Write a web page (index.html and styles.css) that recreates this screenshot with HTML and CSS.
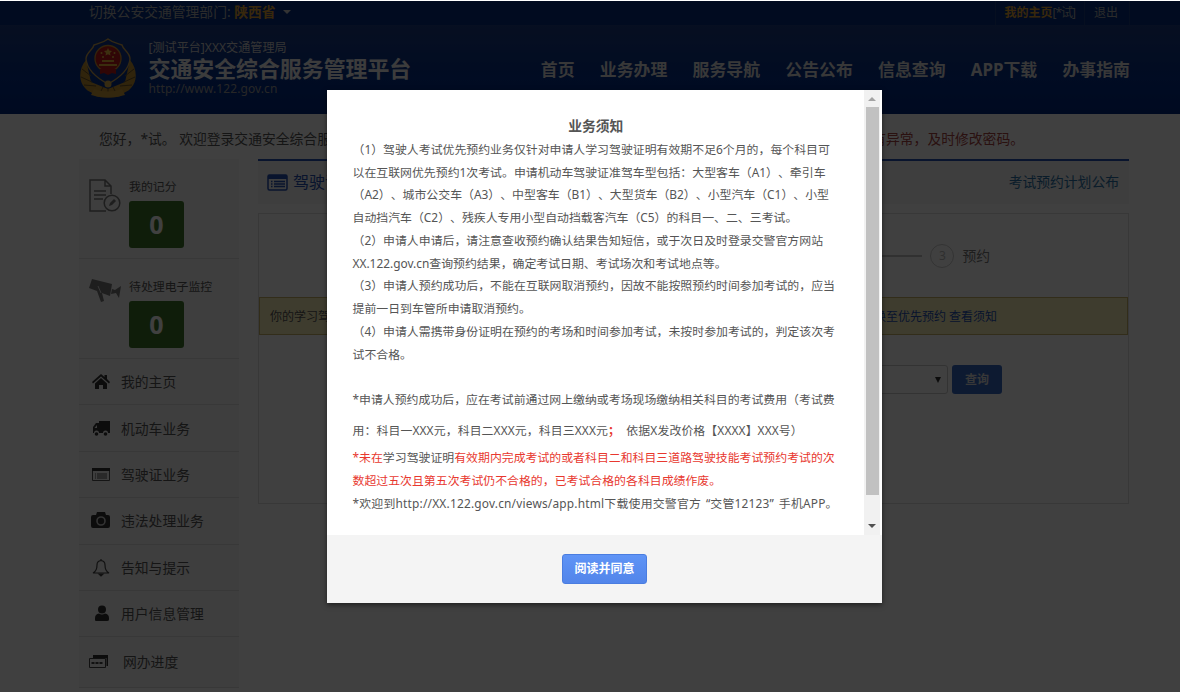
FILE: index.html
```
<!DOCTYPE html>
<html lang="zh-CN">
<head>
<meta charset="UTF-8">
<title>交通安全综合服务管理平台</title>
<link rel="stylesheet" href="styles.css">
</head>
<body>

<div class="topbar">
  <div class="container topbar-in">
    <div class="depart">切换公安交通管理部门: <b>陕西省</b><i class="caret"></i></div>
    <div class="user">
      <span class="user-item"><b>我的主页</b><span class="name">[*试]</span></span>
      <span class="user-item exit">退出</span>
    </div>
  </div>
</div>

<div class="header">
  <div class="container header-in">
    <svg class="logo" width="58" height="60" viewBox="0 0 58 60">
      <path d="M7 22C0 30-1 43 6 50c3 4 8 4 10 8 8 2 18 2 26 0 2-4 7-4 10-8 7-7 6-20-1-28l-5 22-17 7-17-7z" fill="#c08f30"/>
      <path d="M3 31l9 7M2 39l11 5M5 47l12 1M55 31l-9 7M56 39l-11 5M53 47l-12 1M20 57l4-8M38 57l-4-8M29 58v-8" stroke="#6b5128" stroke-width="1" fill="none"/>
      <path d="M29 1c5 4 10 4 14 6 1 5 8 7 8 14-1 10-9 18-22 25C16 39 8 31 7 21c0-7 7-9 8-14 4-2 9-2 14-6z" fill="#13348a" stroke="#c8a050" stroke-width="1.4"/>
      <circle cx="29" cy="20.500" r="13" fill="#c01818" stroke="#c89030" stroke-width="1.300"/>
      <path d="M29 10l1.200 2.600 2.800.3-2 2 .5 2.700-2.500-1.300-2.500 1.300.5-2.700-2-2 2.800-.3z" fill="#f0c040"/>
      <circle cx="22.500" cy="15" r="1" fill="#f0c040"/><circle cx="35.500" cy="15" r="1" fill="#f0c040"/>
      <circle cx="24" cy="19" r="1" fill="#f0c040"/><circle cx="34" cy="19" r="1" fill="#f0c040"/>
      <path d="M23 22h12v2H23zM20 26h18v2H20z" fill="#e8b23a"/>
      <path d="M21 31h16v5l-4-1-4 2-4-2-4 1z" fill="#c01818"/>
      <circle cx="29" cy="46" r="3.500" fill="#d8ab48"/>
      <path d="M15 51q14 5 28 0l3 6q-17 5-34 0z" fill="#cc9a38"/>
    </svg>
    <div class="brand">
      <div class="brand-sub">[测试平台]XXX交通管理局</div>
      <div class="brand-name">交通安全综合服务管理平台</div>
      <div class="brand-url">http://www.122.gov.cn</div>
    </div>
    <div class="nav">
      <span>首页</span><span>业务办理</span><span>服务导航</span><span>公告公布</span><span>信息查询</span><span>APP下载</span><span>办事指南</span>
    </div>
  </div>
</div>

<div class="container">
  <div class="welcome">
    <span>您好，*试。 欢迎登录交通安全综合服务管理平台</span>
    <span class="warn-text">如有异常，及时修改密码。</span>
  </div>

  <div class="content">
    <div class="side">
      <div class="count">
        <svg width="32" height="34" viewBox="0 0 32 34" fill="none" stroke="#777" stroke-width="1.500">
          <path d="M22 15V7l-6-6H1v31h16M16 1v6h6M5 12h12M5 16h12M5 20h9"/>
          <circle cx="23" cy="24" r="7.800"/>
          <path d="M20 27l1-3 4-4 2 2-4 4z" fill="#777" stroke="none"/>
        </svg>
        <div><p>我的记分</p><b class="num">0</b></div>
      </div>
      <div class="count">
        <svg class="cam" width="32" height="26" viewBox="0 0 32 26" fill="#777">
          <path d="M3 1l20 5-2 12-8-3 2 8-3 1-4-11-8-3zM23 11l3 1 6-4-2 12-3-5-5 1z"/>
          <path d="M9 8l3 7" stroke="#ddd" fill="none"/>
        </svg>
        <div><p>待处理电子监控</p><b class="num">0</b></div>
      </div>
      <div class="item">
        <svg width="20" height="18" viewBox="0 0 20 18" fill="#333"><path d="M10 1l3.500 3V2H16v4l3 3-1 1.500-8-7-8 7L1 9zM10 5l6 5.500V16h-4v-4H8v4H4v-5.500z"/></svg>我的主页
      </div>
      <div class="item">
        <svg width="20" height="18" viewBox="0 0 20 18" fill="#333"><path d="M8 1h11v12h-2a2.500 2.500 0 0 0-5 0H8a2.500 2.500 0 0 0-5 0H2V7l3-4h3z"/><path d="M3.500 8L6 5v3z" fill="#eee"/><circle cx="5.500" cy="14" r="1.800"/><circle cx="14.500" cy="14" r="1.800"/></svg>机动车业务
      </div>
      <div class="item">
        <svg width="20" height="18" viewBox="0 0 20 18" fill="none" stroke="#555"><path d="M1.500 2.500h17v12h-17zM4 8h1M6 8h10M4 10h1M6 10h10M4 12h1M6 12h10"/><path d="M1 2h18v3H1z" fill="#333" stroke="none"/></svg>驾驶证业务
      </div>
      <div class="item">
        <svg width="20" height="18" viewBox="0 0 20 18" fill="#333"><path d="M5 3l1-3h8l1 3h2q2 0 2 2v9q0 2-2 2H2q-2 0-2-2V5q0-2 2-2z"/><circle cx="10" cy="9" r="4" fill="none" stroke="#ccc" stroke-width="1.600"/></svg>违法处理业务
      </div>
      <div class="item">
        <svg width="20" height="18" viewBox="0 0 20 18" fill="none" stroke="#444" stroke-width="1.200"><path d="M2 14q4-2 4-8 0-4 4-4.500Q14 2 14 6q0 6 4 8zM10 0v2"/><path d="M8 15h4l-2 2z" fill="#444"/></svg>告知与提示
      </div>
      <div class="item">
        <svg width="20" height="18" viewBox="0 0 20 18" fill="#333"><circle cx="11" cy="4.500" r="4"/><path d="M4 15v-2q0-4 4-4.500 3 2 6 0 4 .5 4 4.500v1.500q0 1.500-2 1.500H5q-1 0-1-1z"/></svg>用户信息管理
      </div>
      <div class="item last">
        <svg width="22" height="18" viewBox="0 0 22 18" fill="none" stroke="#444"><path d="M1.500 5.500h16v9h-16zM3 10h12" /><path d="M5 2h15v11h-1.500V5H5z" fill="#333" stroke="none"/><path d="M4 9h2v2H4zM8 9h2v2H8zM12 9h2v2h-2z" fill="#444" stroke="none"/></svg>网办进度
      </div>
    </div>

    <div class="main">
      <div class="title">
        <svg width="21" height="17" viewBox="0 0 21 17"><rect x="1" y="1" width="19" height="15" rx="1.500" fill="none" stroke="#2450b4" stroke-width="1.500"/><path d="M1 1h19v4H1z" fill="#2450b4"/><path d="M4 7.500h1.500M7 7.500h11M4 10h1.500M7 10h11M4 12.500h1.500M7 12.500h11" stroke="#2450b4" stroke-width="1.300"/></svg>
        <span>驾驶证业务</span>
        <a>考试预约计划公布</a>
      </div>
      <div class="panel">
        <div class="steps"><i class="line"></i><b>3</b><span>预约</span></div>
        <div class="alert">
          <span>你的学习驾驶证明</span>
          <span class="alert-link">切换至优先预约 查看须知</span>
        </div>
        <div class="query">
          <div class="select"><i class="arrow"></i></div>
          <div class="btn">查询</div>
        </div>
      </div>
    </div>
  </div>
</div>

<div class="mask">
  <div class="modal">
    <div class="modal-body">
      <div class="notice">
        <h4>业务须知</h4>
        <p>（1）驾驶人考试优先预约业务仅针对申请人学习驾驶证明有效期不足6个月的，每个科目可<br>
        以在互联网优先预约1次考试。申请机动车驾驶证准驾车型包括：大型客车（A1）、牵引车<br>
        （A2）、城市公交车（A3）、中型客车（B1）、大型货车（B2）、小型汽车（C1）、小型<br>
        自动挡汽车（C2）、残疾人专用小型自动挡载客汽车（C5）的科目一、二、三考试。</p>
        <p>（2）申请人申请后，请注意查收预约确认结果告知短信，或于次日及时登录交警官方网站<br>
        XX.122.gov.cn查询预约结果，确定考试日期、考试场次和考试地点等。</p>
        <p>（3）申请人预约成功后，不能在互联网取消预约，因故不能按照预约时间参加考试的，应当<br>
        提前一日到车管所申请取消预约。</p>
        <p>（4）申请人需携带身份证明在预约的考场和时间参加考试，未按时参加考试的，判定该次考<br>
        试不合格。</p>
        <p class="fee">*申请人预约成功后，应在考试前通过网上缴纳或考场现场缴纳相关科目的考试费用（考试费<br>
        <span class="price">用：科目一XXX元，科目二XXX元，科目三XXX元<b class="red">；</b>&nbsp; 依据X发改价格【XXXX】XXX号）</span></p>
        <p class="red">*未在<span class="dark">学习驾驶证明</span>有效期内完成考试的或者科目二和科目三道路驾驶技能考试预约考试的次<br>
        数超过五次且第五次考试仍不合格的，已考试合格的各科目成绩作废。</p>
        <p class="app">*欢迎到http://XX.122.gov.cn/views/app.html下载使用交警官方 “交管12123” 手机APP。</p>
      </div>
      <div class="scrollbar">
        <i class="up"></i>
        <div class="thumb"></div>
        <i class="down"></i>
      </div>
    </div>
    <div class="modal-foot"><button>阅读并同意</button></div>
  </div>
</div>

</body>
</html>
```
FILE: styles.css
```
* {
  box-sizing: border-box;
}
html, body {
  margin: 0;
  padding: 0;
  height: 692px;
  overflow: hidden;
}
body {
  padding-top: 1px;
  background: #fff;
  color: #555;
  font: 14px/20px "Noto Sans", "Noto Sans CJK SC", sans-serif;
  text-spacing-trim: space-all;
}
p, h4 {
  margin: 0;
}
.container {
  width: 1051px;
  margin-left: 79px;
}

/* 顶部 */
.topbar {
  height: 24px;
  background: #042f80;
  color: #aaa;
}
.topbar-in {
  display: flex;
  justify-content: space-between;
  padding-left: 10px;
  line-height: 22px;
}
.depart {
  font-size: 13.8px;
  white-space: nowrap;
}
.topbar b {
  color: #e0a030;
}
.caret {
  display: inline-block;
  margin-left: 7px;
  vertical-align: 3px;
  border: 4px solid transparent;
  border-top-color: #ccc;
  border-bottom: 0;
}
.user {
  display: flex;
  font-size: 12px;
  border-left: 1px solid #1b3f80;
}
.user-item {
  padding: 0 9px 0 8px;
  border-right: 1px solid #1b3f80;
  height: 24px;
  line-height: 24px;
}
.user-item .name {
  letter-spacing: -1px;
}
.exit {
  padding: 0 11px 0 9px;
}
.header {
  height: 89px;
  background: linear-gradient(#1c3c84, #04308a 60%, #002880);
  color: #fff;
}
.header-in {
  display: flex;
  padding-top: 13px;
}
.logo {
  margin-right: 11.5px;
}
.brand {
  flex: 1;
  white-space: nowrap;
  color: #f0f0f0;
}
.brand-sub {
  margin-top: 1px;
  font-size: 12.1px;
  line-height: 17px;
  color: #ccc;
}
.brand-name {
  font-size: 21.9px;
  line-height: 26px;
  font-weight: bold;
}
.brand-url {
  font-size: 12px;
  line-height: 14px;
  letter-spacing: 0.1px;
  color: #999;
}
.nav {
  display: flex;
  gap: 25.2px;
  padding-top: 20px;
  font-size: 16.9px;
  line-height: 24px;
  font-weight: bold;
  color: #ddd;
  white-space: nowrap;
}

.welcome {
  display: flex;
  justify-content: space-between;
  height: 45px;
  padding: 0 106px 0 20px;
  line-height: 50px;
  font-size: 13.8px;
}
.warn-text {
  color: #a94442;
}
.content {
  display: flex;
  gap: 19px;
}

/* 左侧菜单 */
.side {
  width: 160px;
  background: #f5f5f5;
}
.count {
  display: flex;
  height: 100px;
  padding: 17px 0 0 10px;
  gap: 8px;
  border-bottom: 1px solid #ddd;
  font-size: 11.9px;
  line-height: 20px;
}
.count svg {
  margin-top: 3px;
}
.count .cam {
  margin-top: 2px;
}
.num {
  display: block;
  width: 55px;
  height: 47px;
  margin-top: 5px;
  border-radius: 3px;
  background: #3d7628;
  color: #fff;
  font-size: 25px;
  line-height: 47px;
  text-align: center;
}
.item {
  display: flex;
  align-items: center;
  gap: 10px;
  height: 46.4px;
  padding: 1px 0 0 12px;
  border-bottom: 1px solid #ddd;
  font-size: 13.8px;
}
.last {
  height: 51px;
  padding: 0 0 0 9px;
  gap: 13px;
}

/* 右侧 */
.main {
  width: 871px;
}
.title {
  display: flex;
  align-items: center;
  height: 45px;
  padding: 0 10px 1px 9px;
  gap: 5px;
  border-top: 2px solid #2450b4;
  background: #f5f5f5;
  color: #2450b4;
  font-size: 16px;
}
.title a {
  margin-left: auto;
  font-size: 13.8px;
  color: #2a72a8;
}
.panel {
  height: 291px;
  margin-top: 9px;
  border: 1px solid #ddd;
}
.steps {
  display: flex;
  align-items: center;
  justify-content: flex-end;
  gap: 8px;
  height: 83px;
  padding: 1px 138px 0 0;
}
.steps .line {
  width: 200px;
  border-top: 2px solid #c4c4c4;
}
.steps b {
  width: 24px;
  height: 24px;
  border: 1px solid #ccc;
  border-radius: 50%;
  font-size: 12px;
  line-height: 22px;
  font-weight: normal;
  text-align: center;
  color: #bbb;
}
.steps span {
  color: #777;
  font-size: 13.8px;
}
.alert {
  display: flex;
  justify-content: space-between;
  height: 38px;
  padding: 1px 130px 0 10px;
  border: 1px solid #c8b468;
  background: #f8efb8;
  font-size: 12px;
  line-height: 36px;
}
.alert-link {
  color: #2450b4;
}
.query {
  display: flex;
  justify-content: flex-end;
  gap: 4px;
  padding: 30px 126px 0 0;
}
.select {
  display: flex;
  align-items: center;
  justify-content: flex-end;
  width: 200px;
  height: 29px;
  padding-right: 6px;
  border: 1px solid #ccc;
  border-radius: 3px;
}
.arrow {
  border: 3px solid transparent;
  border-top: 6px solid #333;
  border-bottom: 0;
}
.btn {
  width: 50px;
  height: 29px;
  border-radius: 3px;
  background: #3668c4;
  color: #ddd;
  font-size: 12px;
  line-height: 29px;
  font-weight: bold;
  text-align: center;
}

/* 弹窗 */
.mask {
  position: absolute;
  inset: 1px 0 0;
  padding: 89px 0 0 327px;
  background: rgba(0, 0, 0, 0.75);
}
.modal {
  width: 555px;
  height: 513px;
  background: #fff;
  box-shadow: 0 2px 5px rgba(0, 0, 0, 0.5);
}
.modal-body {
  display: flex;
  height: 445px;
}
.notice {
  width: 537px;
  padding: 25px 0 0 25.5px;
  font-size: 11.9px;
  line-height: 22.75px;
  white-space: nowrap;
}
.notice h4 {
  padding-right: 25px;
  text-align: center;
  font-size: 13.8px;
}
.notice .fee {
  padding-top: 19px;
  line-height: 31px;
}
.price {
  letter-spacing: 0.1px;
}
.app {
  letter-spacing: 0.2px;
  word-spacing: 1.5px;
}
.red {
  color: #e8382f;
}
.dark {
  color: #555;
}
.scrollbar {
  display: flex;
  flex-direction: column;
  align-items: center;
  width: 16px;
  padding: 7px 0;
  background: #f1f1f1;
}
.scrollbar i {
  border: 4px solid transparent;
}
.scrollbar .up {
  border-top: 0;
  border-bottom-color: #a3a3a3;
}
.scrollbar .down {
  margin-top: auto;
  border-bottom: 0;
  border-top-color: #505050;
}
.thumb {
  width: 13px;
  height: 388px;
  margin-top: 6px;
  background: #c1c1c1;
}
.modal-foot {
  height: 68px;
  padding-top: 19px;
  background: #f4f4f4;
  text-align: center;
}
.modal-foot button {
  width: 85px;
  height: 30px;
  padding: 0;
  border: 1px solid #4a7de0;
  border-radius: 3px;
  background: linear-gradient(#5f94f6, #5285ea);
  color: #fff;
  font: bold 12px/28px "Noto Sans", "Noto Sans CJK SC", sans-serif;
}
```
